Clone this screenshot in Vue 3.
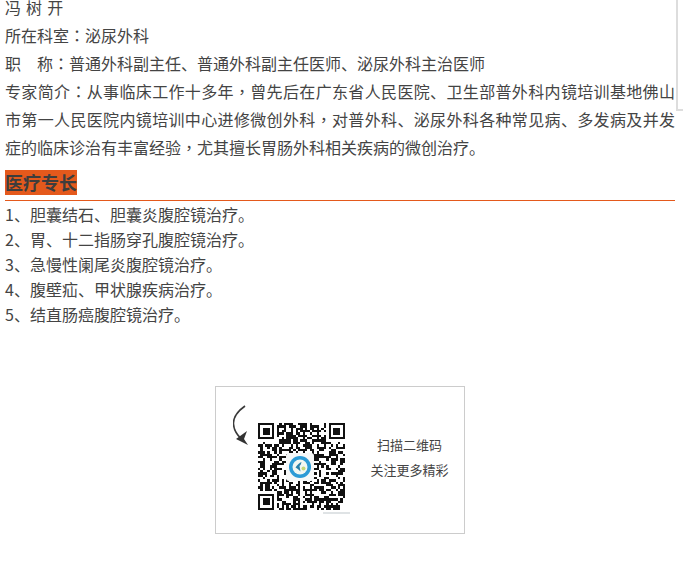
<script setup>
const specialties = [
  '1、胆囊结石、胆囊炎腹腔镜治疗。',
  '2、胃、十二指肠穿孔腹腔镜治疗。',
  '3、急慢性阑尾炎腹腔镜治疗。',
  '4、腹壁疝、甲状腺疾病治疗。',
  '5、结直肠癌腹腔镜治疗。'
]

const SIZE = 37
function inFinder(x, y) {
  return (x < 8 && y < 8) || (x >= SIZE - 8 && y < 8) || (x < 8 && y >= SIZE - 8)
}
function qrPath() {
  let seed = 48271
  const next = () => {
    seed = (seed * 16807) % 2147483647
    return seed / 2147483647
  }
  let d = ''
  for (let y = 0; y < SIZE; y++) {
    for (let x = 0; x < SIZE; x++) {
      const on = next() > 0.46
      if (on && !inFinder(x, y)) d += `M${x} ${y}h1v1h-1z`
    }
  }
  return d
}
const modules = qrPath()
const finders = [
  [0, 0],
  [SIZE - 7, 0],
  [0, SIZE - 7]
]
</script>

<template>
  <div class="page">
    <div class="frame-corner"></div>
    <p class="line name">冯 树 开</p>
    <p class="line">所在科室<span class="punct">：</span>泌尿外科</p>
    <p class="line">职　称<span class="punct">：</span>普通外科副主任、普通外科副主任医师、泌尿外科主治医师</p>
    <p class="line bio">专家简介<span class="punct">：</span>从事临床工作十多年<span class="punct">，</span>曾先后在广东省人民医院、卫生部普外科内镜培训基地佛山市第一人民医院内镜培训中心进修微创外科<span class="punct">，</span>对普外科、泌尿外科各种常见病、多发病及并发症的临床诊治有丰富经验<span class="punct">，</span>尤其擅长胃肠外科相关疾病的微创治疗。</p>

    <div class="section-head"><span class="section-title">医疗专长</span></div>
    <ul class="list">
      <li v-for="item in specialties" :key="item">{{ item }}</li>
    </ul>

    <div class="qr-card">
      <div class="qr-art">
        <svg class="arrow" width="26" height="46" viewBox="0 0 26 46" fill="none">
          <path d="M12 1C5 6 0 12 0.5 19c.4 6 3 10 7 14" stroke="#3a3a3a" stroke-width="1.6" fill="none" />
          <path d="M15 40 3 34 14 26 11 34z" fill="#333" />
        </svg>
        <div class="qr-box">
          <svg class="qr" width="87" height="87" :viewBox="`0 0 ${SIZE} ${SIZE}`" shape-rendering="crispEdges">
            <path :d="modules" fill="#111" />
            <g v-for="f in finders" :key="f[0] + '-' + f[1]">
              <rect :x="f[0]" :y="f[1]" width="7" height="7" fill="#111" />
              <rect :x="f[0] + 1" :y="f[1] + 1" width="5" height="5" fill="#fff" />
              <rect :x="f[0] + 2" :y="f[1] + 2" width="3" height="3" fill="#111" />
            </g>
          </svg>
          <svg class="qr-logo" width="28" height="28" viewBox="0 0 28 28">
            <rect width="28" height="28" rx="3" fill="#f6f8f8" />
            <circle cx="14" cy="14" r="11" fill="#2c9bd6" />
            <circle cx="14" cy="14" r="7.5" fill="#f2f7f2" />
            <path d="M9.5 14.5c2-3 4-4.500 6-5.500-.4 2-1 3-2 4l1 5.500c-1.500-1-2.500-3-5-4z" fill="#2a7fa8" />
            <circle cx="17.500" cy="15.500" r="2" fill="#c5d77a" />
          </svg>
          <div class="qr-mark"></div>
        </div>
      </div>
      <div class="qr-text">
        <span>扫描二维码</span>
        <span>关注更多精彩</span>
      </div>
    </div>
  </div>
</template>

<style scoped>
.page {
  position: relative;
  box-sizing: border-box;
  width: 683px;
  height: 570px;
  overflow: hidden;
  padding: 0 8px 0 5px;
  background: #fff;
  color: #444;
  font-family: "Noto Sans CJK SC", "Liberation Sans", sans-serif;
  font-size: 16px;
}
.frame-corner {
  position: absolute;
  top: -2px;
  left: 676px;
  width: 12px;
  height: 111px;
  border-left: 2px solid #ddd;
  border-bottom: 2px solid #ddd;
}
.line {
  margin: 0;
  line-height: 28px;
}
.name {
  margin-top: -7px;
  word-spacing: 1.5px;
}
.punct {
  font-family: "Noto Sans CJK TC", sans-serif;
}
.bio {
  text-align: justify;
}
.section-head {
  height: 33px;
  margin-top: 7px;
  box-sizing: border-box;
  border-bottom: 1px solid #e4591c;
  padding-top: 2px;
}
.section-title {
  display: inline-block;
  height: 25px;
  line-height: 25px;
  background: #e4591c;
  color: #3d3d3d;
  font-size: 18px;
  font-weight: 700;
}
.list {
  list-style: none;
  margin: 1px 0 0;
  padding: 0;
}
.list li {
  line-height: 25px;
}
.qr-card {
  display: flex;
  box-sizing: border-box;
  width: 250px;
  height: 148px;
  margin: 59px 0 0 210px;
  border: 1px solid #ccc;
}
.qr-art {
  display: flex;
  align-items: flex-start;
  width: 139px;
  padding: 18px 0 0 17px;
  box-sizing: border-box;
}
.arrow {
  flex: none;
  margin-right: -1px;
}
.qr-box {
  position: relative;
  flex: none;
  width: 87px;
  height: 87px;
  margin-top: 18px;
}
.qr {
  display: block;
  filter: blur(0.45px);
}
.qr-logo {
  position: absolute;
  left: 28px;
  top: 30px;
  filter: blur(0.3px);
}
.qr-mark {
  position: absolute;
  left: 65px;
  bottom: -4px;
  width: 27px;
  height: 2px;
  background: #dfe3e5;
}
.qr-text {
  flex: 1;
  display: flex;
  flex-direction: column;
  align-items: center;
  justify-content: center;
  padding-bottom: 6px;
  font-size: 13px;
  line-height: 25px;
  color: #444;
}
</style>
